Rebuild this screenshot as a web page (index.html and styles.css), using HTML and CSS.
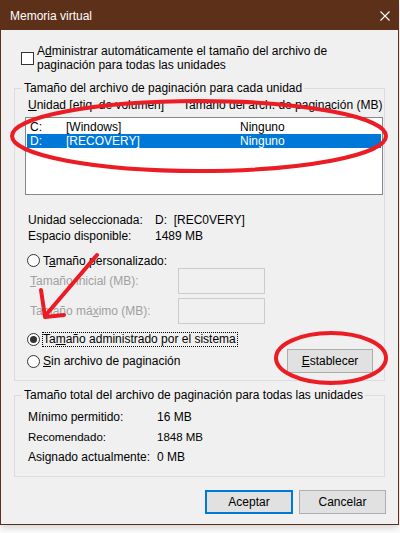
FILE: index.html
```html
<!DOCTYPE html>
<html lang="es">
<head>
    <meta charset="UTF-8">
    <meta name="viewport" content="width=device-width, initial-scale=1.0">
    <title>Memoria virtual</title>
    <link rel="stylesheet" href="styles.css">
</head>
<body>
    <!-- Dialog window -->
    <div class="window">
        <div class="titlebar">
            <span class="title">Memoria virtual</span>
            <svg class="close" width="10" height="10" viewBox="0 0 10 10">
                <path d="M0.5 0.5 L9.5 9.5 M9.5 0.5 L0.5 9.5" stroke="#fff" stroke-width="1.1" fill="none"/>
            </svg>
        </div>

        <div class="content">
            <!-- Automatic management checkbox -->
            <div class="check-row">
                <span class="checkbox"></span>
                <span class="check-text">A<u>d</u>ministrar automáticamente el tamaño del archivo de<br>paginación para todas las unidades</span>
            </div>

            <!-- Per-drive paging file group -->
            <fieldset class="group">
                <legend>Tamaño del archivo de paginación para cada unidad</legend>
                <div class="group-body drives">
                    <div class="list-head">
                        <span class="col-unit"><u>U</u>nidad [etiq. de volumen]</span>
                        <span>Tamaño del arch. de paginación (MB)</span>
                    </div>
                    <div class="listbox">
                        <div class="list-row"><span>C:</span><span>[Windows]</span><span>Ninguno</span></div>
                        <div class="list-row selected"><span>D:</span><span>[RECOVERY]</span><span>Ninguno</span></div>
                    </div>

                    <div class="info">
                        <span>Unidad seleccionada:</span><span>D:&nbsp; [REC0VERY]</span>
                        <span>Espacio disponible:</span><span>1489 MB</span>
                    </div>

                    <div class="radio-row custom-radio">
                        <span class="radio"></span>
                        <span>T<u>a</u>maño personalizado:</span>
                    </div>
                    <div class="size-rows">
                        <div class="size-row">
                            <span class="disabled"><u>T</u>amaño inicial (MB):</span>
                            <span class="textbox"></span>
                        </div>
                        <div class="size-row">
                            <span class="disabled">Tamaño má<u>x</u>imo (MB):</span>
                            <span class="textbox"></span>
                        </div>
                    </div>

                    <div class="radio-row system-radio">
                        <span class="radio checked"></span>
                        <span class="focus">Ta<u>m</u>año administrado por el sistema</span>
                    </div>
                    <div class="radio-row none-row">
                        <span class="radio"></span>
                        <span class="grow"><u>S</u>in archivo de paginación</span>
                        <button class="btn set-btn"><u>E</u>stablecer</button>
                    </div>
                </div>
            </fieldset>

            <!-- Totals for all drives -->
            <fieldset class="group totals">
                <legend>Tamaño total del archivo de paginación para todas las unidades</legend>
                <div class="group-body totals-body">
                    <span>Mínimo permitido:</span><span>16 MB</span>
                    <span class="odd">Recomendado:</span><span class="odd">1848 MB</span>
                    <span>Asignado actualmente:</span><span>0 MB</span>
                </div>
            </fieldset>

            <div class="actions">
                <button class="btn default-btn">Aceptar</button>
                <button class="btn">Cancelar</button>
            </div>
        </div>
    </div>

    <!-- Red hand-drawn annotations over the screenshot -->
    <svg class="marks" width="400" height="533" viewBox="0 0 400 533">
        <g fill="none" stroke="#ec1c24" stroke-width="4" stroke-linecap="round" stroke-linejoin="round">
            <ellipse cx="199" cy="136" rx="187" ry="35"/>
            <ellipse cx="331" cy="358" rx="55" ry="25"/>
            <path d="M97 255 L45 316"/>
            <path d="M41 290 L45 317 L64 315"/>
        </g>
    </svg>
</body>
</html>
```

FILE: styles.css
```css
/* Reset */
* {
    margin: 0;
    padding: 0;
    box-sizing: border-box;
}

body {
    font-family: "Liberation Sans", Arial, sans-serif;
    font-size: 12px;
    color: #000;
    background: #fff;
    position: relative;
    width: 400px;
    height: 533px;
    overflow: hidden;
}

u {
    text-decoration: underline;
    text-underline-offset: 1px;
}

/* Window frame */
.window {
    width: 399px;
    border: 1px solid #5d3019;
    background: #f0f0f0;
    box-shadow: 0 3px 8px rgba(0, 0, 0, 0.18);
}

.titlebar {
    height: 29px;
    background: #5d3019;
    color: #fff;
    display: flex;
    align-items: center;
    justify-content: space-between;
    padding: 0 8px 0 9px;
}

.title {
    line-height: 14px;
}

.close {
    display: block;
}

.content {
    padding: 14px 13px 10px 13px;
}

/* Checkbox with two-line text */
.check-row {
    display: flex;
    align-items: center;
    padding-left: 7px;
    line-height: 14px;
}

.checkbox {
    width: 13px;
    height: 13px;
    border: 1px solid #333;
    background: #fff;
    margin-right: 3px;
    flex-shrink: 0;
}

/* Group boxes */
.group {
    border: 1px solid #dcdcdc;
    margin-top: 9px;
    padding: 0;
    min-width: 0;
}

.group legend {
    margin-left: 7px;
    padding: 0 2px;
    line-height: 14px;
}

.drives {
    padding: 3px 1px 7px 13px;
}

.list-head {
    display: flex;
    line-height: 14px;
}

.col-unit {
    width: 155px;
}

.listbox {
    width: 358px;
    height: 78px;
    margin: 5px 0 0 -3px;
    border: 1px solid #828790;
    background: #fff;
    padding: 2px 1px 0 1px;
}

.list-row {
    display: grid;
    grid-template-columns: 36px 174px 1fr;
    height: 14px;
    line-height: 14px;
    padding-left: 3px;
}

.list-row.selected {
    background: #0078d7;
    color: #fff;
}

.info {
    display: grid;
    grid-template-columns: 127px 1fr;
    line-height: 16px;
    margin-top: 17px;
}

/* Radio buttons */
.radio-row {
    display: flex;
    align-items: center;
    margin-left: -1px;
}

.radio {
    width: 13px;
    height: 13px;
    border: 1px solid #333;
    border-radius: 50%;
    background: #fff;
    margin-right: 3px;
    flex-shrink: 0;
    display: flex;
    align-items: center;
    justify-content: center;
}

.radio.checked::after {
    content: "";
    width: 7px;
    height: 7px;
    border-radius: 50%;
    background: #333;
}

.custom-radio {
    height: 15px;
    margin-top: 9px;
}

.size-rows {
    display: flex;
    flex-direction: column;
    gap: 4px;
}

.size-row {
    display: grid;
    grid-template-columns: 150px 87px;
    align-items: center;
    height: 26px;
}

.disabled {
    color: #a0a0a0;
    padding-left: 2px;
}

.textbox {
    height: 26px;
    border: 1px solid #cccccc;
    background: #f0f0f0;
}

.system-radio {
    height: 16px;
    margin-top: 7px;
}

.focus {
    line-height: 13px;
    outline: 1px dotted #000;
    padding-right: 1px;
}

.none-row {
    height: 24px;
    margin-top: 2px;
}

.grow {
    flex: 1;
}

/* Push buttons */
.btn {
    font-family: inherit;
    font-size: 12px;
    color: #000;
    height: 24px;
    background: #e1e1e1;
    border: 1px solid #adadad;
    width: 87px;
}

.set-btn {
    width: 86px;
    margin-right: 10px;
}

.default-btn {
    width: 88px;
    border: 2px solid #0078d7;
}

/* Totals group */
.totals {
    margin-top: 7px;
}

.totals-body {
    display: grid;
    grid-template-columns: 129px 1fr;
    grid-template-rows: 16px 16px 16px;
    row-gap: 4px;
    line-height: 16px;
    padding: 7px 0 11px 13px;
}

.odd {
    font-size: 11.5px;
}

.actions {
    display: flex;
    justify-content: flex-end;
    gap: 6px;
    margin: 13px -1px 0 0;
}

/* Annotation overlay */
.marks {
    position: absolute;
    top: 0;
    left: 0;
    pointer-events: none;
}
```
